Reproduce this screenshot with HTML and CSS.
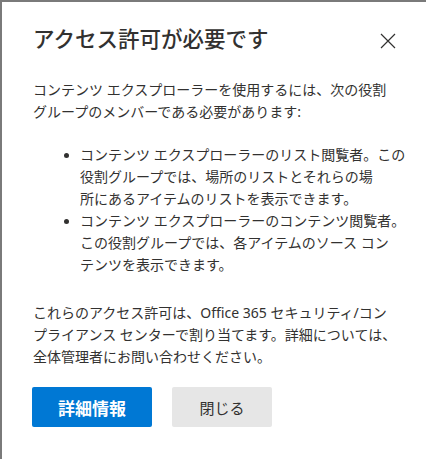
FILE: index.html
```html
<!DOCTYPE html>
<html lang="ja">
<head>
<meta charset="utf-8">
<title>アクセス許可が必要です</title>
<link rel="stylesheet" href="styles.css">
</head>
<body>
<div class="dialog">
  <div class="header">
    <h1 class="title">アクセス許可が必要です</h1>
    <button class="close" aria-label="閉じる">
      <svg width="16" height="16" viewBox="0 0 16 16"><path d="M1 1 L15 15 M15 1 L1 15" stroke="#323130" stroke-width="1.2" fill="none"/></svg>
    </button>
  </div>
  <p class="text">コンテンツ エクスプローラーを使用するには、次の役割<br>グループのメンバーである必要があります:</p>
  <ul class="list">
    <li class="item"><span>コンテンツ エクスプローラーのリスト閲覧者。この<br>役割グループでは、場所のリストとそれらの場<br>所にあるアイテムのリストを表示できます。</span></li>
    <li class="item"><span>コンテンツ エクスプローラーのコンテンツ閲覧者。<br>この役割グループでは、各アイテムのソース コン<br>テンツを表示できます。</span></li>
  </ul>
  <p class="text note">これらのアクセス許可は、Office 365 セキュリティ/コン<br>プライアンス センターで割り当てます。詳細については、<br>全体管理者にお問い合わせください。</p>
  <div class="actions">
    <button class="btn primary">詳細情報</button>
    <button class="btn secondary">閉じる</button>
  </div>
</div>
</body>
</html>
```
FILE: styles.css
```css
html, body {
  margin: 0;
  padding: 0;
  background: #7a7a7a;
}
body {
  padding: 2px 0 0 2px;
  height: 459px;
  box-sizing: border-box;
  font-family: "Noto Sans", "Noto Sans CJK JP", sans-serif;
  color: #323130;
}
.dialog {
  background: #ffffff;
  height: 100%;
  padding: 23px 30px 0 30px;
  box-sizing: border-box;
}
.header {
  display: flex;
  justify-content: space-between;
  align-items: center;
}
.title {
  margin: 0;
  font-size: 21.5px;
  line-height: 28px;
  font-weight: 500;
  white-space: nowrap;
  padding-left: 1px;
}
.close {
  border: 0;
  background: transparent;
  padding: 0;
  width: 16px;
  height: 16px;
  margin-top: 4px;
  display: flex;
}
.text {
  margin: 26px 0 0 0;
  padding-left: 1px;
  font-size: 14px;
  line-height: 22px;
  white-space: nowrap;
}
.list {
  list-style: none;
  margin: 21px 0 0 0;
  padding: 0 0 0 32px;
  font-size: 14px;
  line-height: 22px;
  white-space: nowrap;
}
.item {
  display: flex;
  gap: 11px;
}
.item::before {
  content: "";
  width: 5px;
  height: 5px;
  border-radius: 50%;
  background: #323130;
  flex-shrink: 0;
  margin-top: 9px;
}
.note {
  margin-top: 26px;
}
.actions {
  display: flex;
  gap: 20px;
  margin-top: 19px;
}
.btn {
  height: 40px;
  border: 0;
  border-radius: 2px;
  font-family: "Noto Sans", "Noto Sans CJK JP", sans-serif;
  padding: 0;
}
.primary {
  width: 120px;
  background: #0078d4;
  color: #ffffff;
  font-size: 17px;
  font-weight: 700;
}
.secondary {
  width: 100px;
  background: #e6e6e6;
  color: #323130;
  font-size: 15px;
  font-weight: 400;
}
```
